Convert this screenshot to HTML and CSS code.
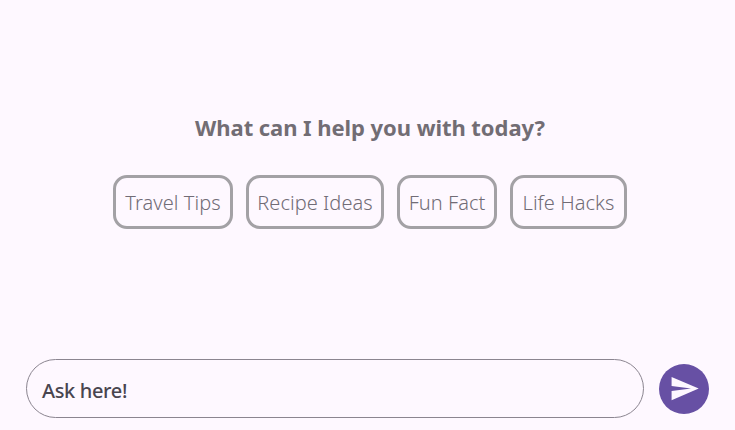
FILE: index.html
```html
<!DOCTYPE html>
<html lang="en">
<head>
<meta charset="utf-8">
<title>Chat</title>
<link rel="stylesheet" href="styles.css">
</head>
<body>
<div class="app">
  <main class="welcome">
    <h1 class="title">What can I help you with today?</h1>
    <div class="chips">
      <button class="chip chip-travel">Travel Tips</button>
      <button class="chip chip-recipe">Recipe Ideas</button>
      <button class="chip chip-fun">Fun Fact</button>
      <button class="chip chip-life">Life Hacks</button>
    </div>
  </main>
  <form class="composer">
    <div class="field">Ask here!</div>
    <button class="send" type="button" aria-label="Send">
      <svg class="send-icon" width="31" height="31" viewBox="0 0 24 24"><path d="M2.01 21L23 12 2.01 3 2 10l15 2-15 2z" fill="#fdf7ff"/></svg>
    </button>
  </form>
</div>
</body>
</html>
```
FILE: styles.css
```css
* { box-sizing: border-box; }
html, body { margin: 0; height: 100%; }
body { background: #fef8ff; font-family: "Noto Sans", sans-serif; overflow: hidden; }
.app { height: 430px; display: flex; flex-direction: column; padding: 0 26px 12px; }
.welcome { flex: 1; display: flex; flex-direction: column; align-items: center; padding: 112px 0 0 5px; }
.title { margin: 0; font-size: 22px; line-height: 30px; font-weight: 700; color: #726d74; letter-spacing: -0.06px; }
.chips { display: flex; gap: 13px; margin-top: 33px; }
.chip { height: 54px; padding: 2px 0 0; border: 3px solid #a3a1a5; border-radius: 14px; background: transparent; color: #716c76; font: 300 20px/1 "Noto Sans", sans-serif; letter-spacing: 0.05px; }
.chip-travel { width: 120px; }
.chip-recipe { width: 138px; }
.chip-fun { width: 100px; }
.chip-life { width: 117px; }
.composer { display: flex; align-items: center; gap: 15px; }
.field { width: 618px; height: 59px; border: 1px solid #8b8590; border-radius: 30px; padding: 3px 0 0 15px; display: flex; align-items: center; font-size: 20px; font-weight: 500; color: #49454f; letter-spacing: -0.35px; }
.send { width: 50px; height: 50px; border: 0; padding: 0; border-radius: 50%; background: #6750a4; display: flex; align-items: center; justify-content: center; }
.send-icon { display: block; }
```
